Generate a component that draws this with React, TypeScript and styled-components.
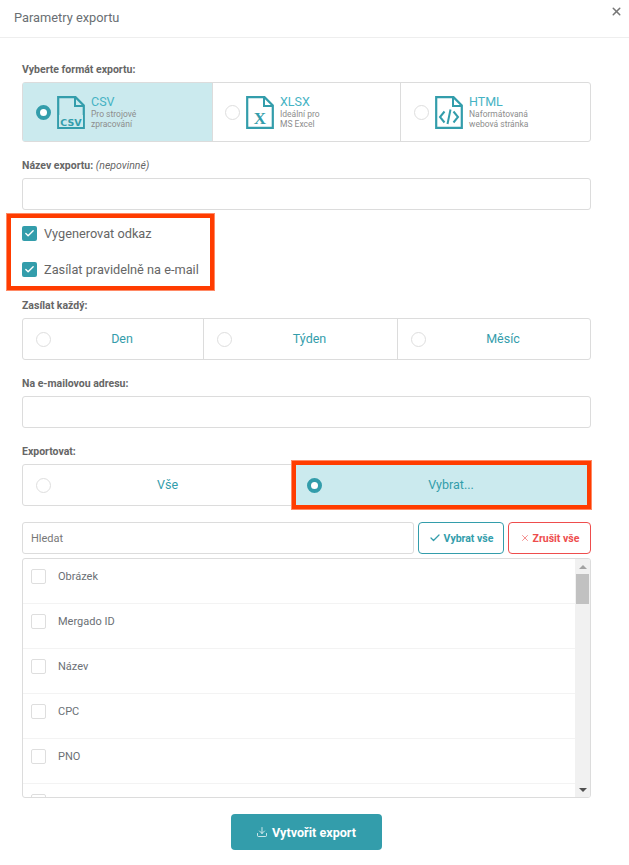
import React from 'react';
import styled, { createGlobalStyle } from 'styled-components';
import { Check, Download, X } from 'lucide-react';

const teal = '#339dab';
const line = '#dcdcdc';
const orange = '#ff3c00';

const GlobalStyle = createGlobalStyle`
  html, body {
    margin: 0;
    padding: 0;
    background: #fff;
  }
  * {
    box-sizing: border-box;
  }
  body {
    font-family: Roboto, "Liberation Sans", sans-serif;
    color: #666;
  }
`;

const Modal = styled.div`
  position: relative;
  width: 629px;
  height: 865px;
  overflow: hidden;
  background: #fff;
`;
const Header = styled.header`
  display: flex;
  align-items: center;
  height: 38px;
  padding: 0 0 3px 14px;
  border-bottom: 1px solid #eee;
  font-size: 12.8px;
  color: #6a6f73;
`;
const CloseBtn = styled.button`
  position: absolute;
  top: 5px;
  right: 6px;
  display: flex;
  padding: 0;
  border: none;
  background: none;
  color: #777;
`;
const Body = styled.div`
  display: flex;
  flex-direction: column;
  padding: 0 38px 0 22px;
`;
const Label = styled.div<{ $top: number }>`
  margin-top: ${p => p.$top}px;
  margin-bottom: 7px;
  height: 13px;
  line-height: 15px;
  font-size: 10.5px;
  font-weight: 700;
  color: #666;
  white-space: nowrap;
  em {
    font-weight: 400;
    font-style: italic;
  }
`;
const Group = styled.div<{ $height: number }>`
  display: flex;
  height: ${p => p.$height}px;
  border: 1px solid ${line};
  border-radius: 3px;
`;
const Segment = styled.div<{ $active?: boolean; $width: number; $thick?: boolean; $pad?: number }>`
  position: relative;
  display: flex;
  align-items: center;
  flex: 0 0 ${p => p.$width}px;
  padding-left: ${p => p.$pad ?? 13}px;
  background: ${p => (p.$active ? '#cbeaee' : 'transparent')};
  & + & {
    border-left: ${p => (p.$thick ? 2 : 1)}px solid ${line};
  }
`;
const PlainSegment = styled(Segment)`
  & + & {
    border-left: none;
  }
`;
const Radio = styled.span<{ $active?: boolean }>`
  flex: none;
  width: 15px;
  height: 15px;
  border-radius: 50%;
  background: #fff;
  border: ${p => (p.$active ? `4.5px solid ${teal}` : '1px solid #dedede')};
`;
const SegmentCaption = styled.span`
  flex: 1;
  padding: 0 10px 2px 0;
  text-align: center;
  font-size: 12.5px;
  color: ${teal};
`;
const FormatIcon = styled.svg`
  flex: none;
  width: 28px;
  height: 33px;
  margin-left: 6px;
`;
const FormatText = styled.div`
  margin-left: 6px;
  display: flex;
  flex-direction: column;
`;
const FormatName = styled.span`
  font-size: 12.5px;
  line-height: 13px;
  color: #45b3c4;
`;
const FormatDesc = styled.span`
  margin-top: 1px;
  font-size: 8.5px;
  line-height: 10px;
  color: #8d8d8d;
  white-space: pre-line;
`;
const TextInput = styled.input<{ $height?: number }>`
  display: block;
  width: 100%;
  height: ${p => p.$height || 32}px;
  padding: 0 8px;
  border: 1px solid ${line};
  border-radius: 3px;
  outline: none;
  background: #fff;
  font-family: inherit;
  font-size: 11px;
  color: #666;
  &::placeholder {
    color: #777;
    opacity: 1;
  }
`;
const CheckSection = styled.div`
  position: relative;
  display: flex;
  flex-direction: column;
  gap: 21px;
  margin-top: 16px;
  margin-bottom: 21px;
`;
const Highlight = styled.div`
  position: absolute;
  top: -13px;
  left: -16px;
  width: 209px;
  height: 78px;
  border: 5px solid ${orange};
  outline: 1px solid #ff8a66;
  outline-offset: -1px;
  pointer-events: none;
`;
const CheckRow = styled.label`
  display: flex;
  align-items: center;
  gap: 7px;
  height: 15px;
  font-size: 12.75px;
  color: #666;
`;
const CheckBox = styled.span<{ $checked?: boolean }>`
  display: flex;
  align-items: center;
  justify-content: center;
  flex: none;
  width: 15px;
  height: 15px;
  border-radius: 2px;
  color: #fff;
  background: ${p => (p.$checked ? teal : '#fff')};
  border: ${p => (p.$checked ? 'none' : '1px solid #dedede')};
`;
const SelectHighlight = styled.div`
  position: absolute;
  top: -5px;
  left: -3px;
  right: -2px;
  bottom: -5px;
  border: 5px solid ${orange};
  outline: 1px solid #ff8a66;
  outline-offset: -1px;
  pointer-events: none;
`;
const SearchRow = styled.div`
  display: flex;
  gap: 4px;
  margin-top: 16px;
  margin-bottom: 4px;
`;
const SearchBox = styled.div`
  flex: 1;
`;
const OutlineBtn = styled.button<{ $color: string; $width: number }>`
  display: flex;
  align-items: center;
  justify-content: center;
  gap: 3px;
  flex: 0 0 ${p => p.$width}px;
  height: 32px;
  padding: 0;
  border: 1px solid ${p => p.$color};
  border-radius: 4px;
  background: #fff;
  font-family: inherit;
  font-size: 10.5px;
  font-weight: 700;
  color: ${p => p.$color};
`;
const ListBox = styled.div`
  display: flex;
  height: 240px;
  border: 1px solid ${line};
  border-radius: 3px;
  overflow: hidden;
`;
const Rows = styled.div`
  flex: 1;
  overflow: hidden;
`;
const Row = styled.div`
  display: flex;
  align-items: flex-start;
  gap: 12px;
  height: 45px;
  padding: 10px 0 0 8px;
  border-bottom: 1px solid #f3f3f3;
  font-size: 11px;
  line-height: 15px;
  color: #6b7075;
`;
const Scrollbar = styled.div`
  display: flex;
  flex-direction: column;
  flex: 0 0 15px;
  background: #f1f1f1;
`;
const ScrollArrow = styled.div<{ $up?: boolean }>`
  display: flex;
  align-items: center;
  justify-content: center;
  height: 15px;
  &::before {
    content: '';
    border-left: 4px solid transparent;
    border-right: 4px solid transparent;
    border-${p => (p.$up ? 'bottom' : 'top')}: 4px solid ${p => (p.$up ? '#a3a3a3' : '#505050')};
  }
`;
const ScrollThumb = styled.div`
  height: 30px;
  margin: 0 1px;
  background: #c1c1c1;
`;
const ScrollTrack = styled.div`
  flex: 1;
`;
const Footer = styled.div`
  display: flex;
  justify-content: center;
  margin-top: 16px;
  padding-right: 1px;
`;
const SubmitBtn = styled.button`
  display: flex;
  align-items: center;
  justify-content: center;
  gap: 4px;
  width: 151px;
  height: 36px;
  padding: 0;
  border: none;
  border-radius: 4px;
  background: ${teal};
  font-family: inherit;
  font-size: 12.6px;
  font-weight: 700;
  color: #fff;
`;

const DocIcon = ({ children }: { children: React.ReactNode }) => (
  <FormatIcon viewBox="0 0 28 33" fill="none">
    <path d="M1.2 1.2H18.5L26.8 9.5V31.8H1.2Z" stroke={teal} strokeWidth="2.2" strokeLinejoin="miter" />
    <path d="M18 1.5V10H26.5" stroke={teal} strokeWidth="2" />
    {children}
  </FormatIcon>
);

const csvIcon = (
  <DocIcon>
    <rect x="2" y="19" width="24" height="12" fill="#cbeaee" />
    <text x="14" y="29.5" textAnchor="middle" fontFamily="'DejaVu Sans', sans-serif" fontWeight="700" fontSize="9.5" fill={teal}>
      CSV
    </text>
  </DocIcon>
);
const xlsxIcon = (
  <DocIcon>
    <text x="14" y="28" textAnchor="middle" fontFamily="'Liberation Serif', serif" fontWeight="700" fontSize="17" fill={teal}>
      X
    </text>
  </DocIcon>
);
const htmlIcon = (
  <DocIcon>
    <path d="M9.5 15.5L5 21L9.5 26.5M18.5 15.5L23 21L18.5 26.5M15.5 13.5L12.5 28" stroke={teal} strokeWidth="2" />
  </DocIcon>
);

const formats = [
  { name: 'CSV', desc: 'Pro strojové\nzpracování', icon: csvIcon, width: 189, pad: 13, active: true },
  { name: 'XLSX', desc: 'Ideální pro\nMS Excel', icon: xlsxIcon, width: 188, pad: 12 },
  { name: 'HTML', desc: 'Naformátovaná\nwebová stránka', icon: htmlIcon, width: 190, pad: 13 },
];
const periods = [
  { name: 'Den', width: 180 },
  { name: 'Týden', width: 194 },
  { name: 'Měsíc', width: 193 },
];
const columns = ['Obrázek', 'Mergado ID', 'Název', 'CPC', 'PNO', ''];

export default function App() {
  return (
    <Modal>
      <GlobalStyle />
      <Header>Parametry exportu</Header>
      <CloseBtn>
        <X size={13} strokeWidth={2.8} />
      </CloseBtn>
      <Body>
        <Label $top={24}>Vyberte formát exportu:</Label>
        <Group $height={60}>
          {formats.map(f => (
            <Segment key={f.name} $width={f.width} $pad={f.pad} $active={f.active} $thick>
              <Radio $active={f.active} />
              {f.icon}
              <FormatText>
                <FormatName>{f.name}</FormatName>
                <FormatDesc>{f.desc}</FormatDesc>
              </FormatText>
            </Segment>
          ))}
        </Group>

        <Label $top={16}>
          Název exportu: <em>(nepovinné)</em>
        </Label>
        <TextInput />

        <CheckSection>
          <Highlight />
          <CheckRow>
            <CheckBox $checked>
              <Check size={11} strokeWidth={3} />
            </CheckBox>
            Vygenerovat odkaz
          </CheckRow>
          <CheckRow>
            <CheckBox $checked>
              <Check size={11} strokeWidth={3} />
            </CheckBox>
            Zasílat pravidelně na e-mail
          </CheckRow>
        </CheckSection>

        <Label $top={0}>Zasílat každý:</Label>
        <Group $height={42}>
          {periods.map(p => (
            <Segment key={p.name} $width={p.width}>
              <Radio />
              <SegmentCaption>{p.name}</SegmentCaption>
            </Segment>
          ))}
        </Group>

        <Label $top={16}>Na e-mailovou adresu:</Label>
        <TextInput />

        <Label $top={16}>Exportovat:</Label>
        <Group $height={42}>
          <PlainSegment $width={271}>
            <Radio />
            <SegmentCaption>Vše</SegmentCaption>
          </PlainSegment>
          <PlainSegment $width={296} $active>
            <Radio $active />
            <SegmentCaption>Vybrat...</SegmentCaption>
            <SelectHighlight />
          </PlainSegment>
        </Group>

        <SearchRow>
          <SearchBox>
            <TextInput placeholder="Hledat" />
          </SearchBox>
          <OutlineBtn $color={teal} $width={86}>
            <Check size={12} strokeWidth={2.5} />
            Vybrat vše
          </OutlineBtn>
          <OutlineBtn $color="#ee4d4d" $width={83}>
            <X size={10} strokeWidth={1.5} />
            Zrušit vše
          </OutlineBtn>
        </SearchRow>

        <ListBox>
          <Rows>
            {columns.map((c, i) => (
              <Row key={i}>
                <CheckBox />
                {c}
              </Row>
            ))}
          </Rows>
          <Scrollbar>
            <ScrollArrow $up />
            <ScrollThumb />
            <ScrollTrack />
            <ScrollArrow />
          </Scrollbar>
        </ListBox>

        <Footer>
          <SubmitBtn>
            <Download size={12} strokeWidth={1.5} />
            Vytvořit export
          </SubmitBtn>
        </Footer>
      </Body>
    </Modal>
  );
}
